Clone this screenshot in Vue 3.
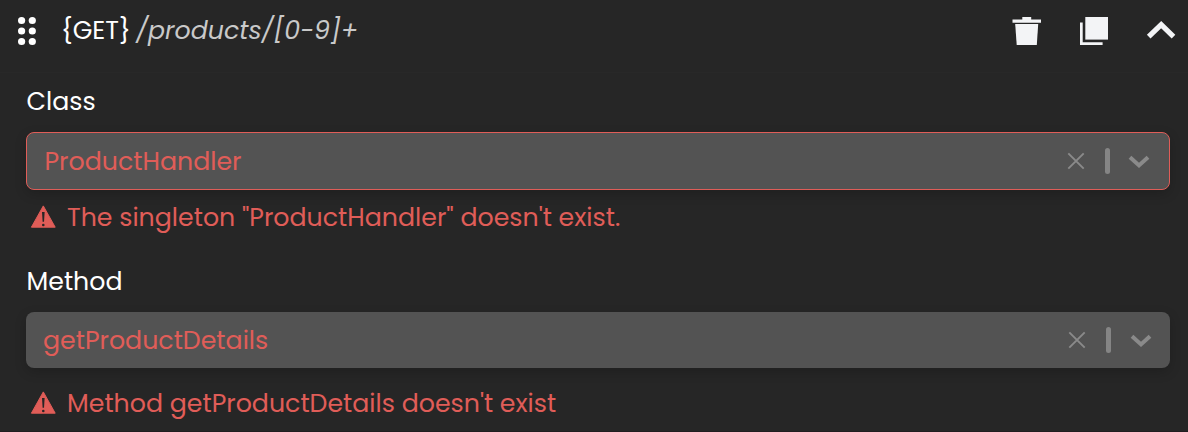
<script setup>
const fields = [
  { id: 'class', label: 'Class', value: 'ProductHandler', message: 'The singleton "ProductHandler" doesn\'t exist.', focused: true },
  { id: 'method', label: 'Method', value: 'getProductDetails', message: "Method getProductDetails doesn't exist", focused: false },
]
const dots = [5.5, 16, 26.5]
</script>

<template>
  <main class="panel">
    <header class="header">
      <svg class="grip" width="20" height="32" viewBox="0 0 20 32">
        <g v-for="y in dots" :key="y" fill="#fff">
          <circle cx="4.6" :cy="y" r="3.6" />
          <circle cx="15.3" :cy="y" r="3.6" />
        </g>
      </svg>
      <span class="verb">{GET}</span>
      <em class="route">/products/[0-9]+</em>
      <div class="actions">
        <svg width="30" height="30" viewBox="0 0 30 30" fill="#f3f4f6">
          <path d="M.5 3.6H10.3V1H19.2V3.6H29V6.8H.5Z" />
          <path d="M3.2 8H26.2L24.8 29H4.7Z" />
        </svg>
        <svg width="30" height="30" viewBox="0 0 30 30" fill="#f3f4f6">
          <path d="M6.3 1H29V23.6H6.3Z" />
          <path d="M1 6.5H3.7V26.3H23.6V29H1Z" />
        </svg>
        <svg width="30" height="30" viewBox="0 0 30 30" fill="none" stroke="#f3f4f6" stroke-width="5.2">
          <path d="M2.7 20.6L15.2 8.6L27.5 20.6" />
        </svg>
      </div>
    </header>
    <section v-for="f in fields" :key="f.id" class="field" :class="f.id">
      <label class="label"><span>{{ f.label }}</span></label>
      <div class="select" :class="{ focused: f.focused }">
        <span class="value">{{ f.value }}</span>
        <svg class="clear" width="18" height="18" viewBox="0 0 18 18" fill="none" stroke="#8a8a8a" stroke-width="1.9">
          <path d="M1.3 1.3L16.7 16.7M16.7 1.3L1.3 16.7" />
        </svg>
        <i class="divider"></i>
        <svg class="chevron" width="22" height="14" viewBox="0 0 22 14" fill="none" stroke="#8a8a8a" stroke-width="4">
          <path d="M2 2.2L11 10.4L20 2.2" />
        </svg>
      </div>
      <div class="error">
        <svg width="26" height="24" viewBox="0 0 26 24">
          <path d="M13.3 .9L25.2 22.2H1.4Z" fill="#e05d58" stroke="#e05d58" stroke-width="1" stroke-linejoin="round" />
          <path d="M12 7H14.6L14 16.8H12.6Z" fill="#262626" />
          <circle cx="13.3" cy="20" r="1.3" fill="#262626" />
        </svg>
        <span class="message">{{ f.message }}</span>
      </div>
    </section>
  </main>
</template>

<style>
body { background: #262626; }
</style>

<style scoped>
.panel {
  box-sizing: border-box;
  width: 1188px;
  height: 432px;
  overflow: hidden;
  background: #262626;
  border-bottom: 1px solid #211d20;
  color: #fff;
  font: 400 25.25px/38px Poppins, Inter, sans-serif;
  white-space: nowrap;
}
.header {
  display: flex;
  align-items: center;
  box-sizing: border-box;
  height: 73px;
  padding: 0 12px 10px 17px;
  border-bottom: 1px solid #282828;
}
.grip { margin-right: 24px; }
.verb { width: 75px; letter-spacing: 0; }
.verb, .route { padding-bottom: 2px; }
.route { color: #c9c9c9; }
.actions { display: flex; gap: 37px; margin-left: auto; }
.field { padding: 0 18px 0 26px; }
.label { display: block; height: 59px; padding: 9px 0 0 0.5px; box-sizing: border-box; }
.select {
  display: flex;
  align-items: center;
  box-sizing: border-box;
  height: 56px;
  padding: 0 18.5px 0 17px;
  border-radius: 8px;
  background: #535353;
  box-shadow: 0 4px 12px rgba(0, 0, 0, 0.18);
  color: #e05d58;
}
.select.focused { height: 58px; border: 1px solid #e05d58; padding: 0 18.5px 0 17.5px; }
.value { padding-bottom: 1px; }
.clear { margin-left: auto; }
.divider { width: 5px; height: 26px; margin: 0 19px 0 20px; border-radius: 3px; background: #858585; }
.focused .divider { margin-right: 18.5px; margin-left: 20px; }
.focused .chevron { margin-right: 0.5px; }
.chevron { margin-top: 2px; }
.error { display: flex; align-items: center; gap: 11px; padding-left: 4px; height: 38px; color: #e05d58; }
.message { padding-bottom: 1px; }
.class .error { margin-top: 8px; }
.method .label { height: 76px; padding-top: 26px; }
.method .error { margin-top: 16px; }
</style>
